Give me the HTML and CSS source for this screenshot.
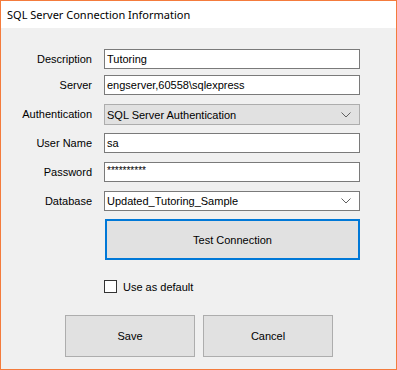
FILE: index.html
```html
<!DOCTYPE html>
<html lang="en">
<head>
    <meta charset="UTF-8">
    <title>SQL Server Connection Information</title>
    <link rel="stylesheet" href="styles.css">
</head>
<body>
    <div class="window">
        <div class="title-bar">SQL Server Connection Information</div>
        <div class="content">
            <div class="form">
                <label class="label">Description</label>
                <div class="field text-box">Tutoring</div>

                <label class="label">Server</label>
                <div class="field text-box">engserver,60558\sqlexpress</div>

                <label class="label tall">Authentication</label>
                <div class="field combo disabled">
                    <span>SQL Server Authentication</span>
                    <svg class="chevron" width="10" height="6" viewBox="0 0 10 6"><path d="M0.5 0.5 L5 5 L9.5 0.5" fill="none" stroke="#606060" stroke-width="1"/></svg>
                </div>

                <label class="label">User Name</label>
                <div class="field text-box">sa</div>

                <label class="label">Password</label>
                <div class="field text-box password">**********</div>

                <label class="label">Database</label>
                <div class="field text-box combo-db">
                    <span>Updated_Tutoring_Sample</span>
                    <svg class="chevron" width="10" height="6" viewBox="0 0 10 6"><path d="M0.5 0.5 L5 5 L9.5 0.5" fill="none" stroke="#606060" stroke-width="1"/></svg>
                </div>

                <div></div>
                <button class="test-btn">Test Connection</button>
            </div>

            <div class="check-row">
                <span class="check-box"></span>
                <span>Use as default</span>
            </div>

            <div class="actions">
                <button class="btn">Save</button>
                <button class="btn">Cancel</button>
            </div>
        </div>
    </div>
</body>
</html>
```

FILE: styles.css
```css
body {
    margin: 0;
    font-family: "Liberation Sans", Arial, sans-serif;
    font-size: 11px;
    color: #000;
    background: #f0f0f0;
}

.window {
    width: 397px;
    height: 370px;
    box-sizing: border-box;
    border: 1px solid #f47b3c;
    background: #f0f0f0;
}

.title-bar {
    height: 27px;
    background: #fff;
    font-family: "Noto Sans", "Open Sans", sans-serif;
    font-size: 11px;
    line-height: 27px;
    padding-left: 6px;
    color: #000;
}

.content {
    padding-top: 21px;
}

.form {
    display: grid;
    grid-template-columns: 91px 256px;
    grid-template-rows: 20px 26px 30px 28px 29px 29px 49px;
    column-gap: 12px;
    align-items: end;
}

.label {
    text-align: right;
    line-height: 20px;
}

.label.tall {
    line-height: 21px;
}

.field {
    height: 20px;
    box-sizing: border-box;
    border: 1px solid #7a7a7a;
    background: #fff;
    display: flex;
    align-items: center;
    padding-left: 2px;
}

.password {
    font-size: 10px;
    align-items: flex-start;
    padding-top: 2px;
}

.combo {
    height: 21px;
    justify-content: space-between;
    padding-right: 8px;
}

.combo.disabled {
    background: #e1e1e1;
    border-color: #adadad;
}

.combo-db {
    justify-content: space-between;
    padding-right: 8px;
}

.chevron {
    display: block;
}

.test-btn {
    height: 41px;
    margin-left: 1px;
    width: 255px;
    box-sizing: border-box;
    border: 2px solid #0078d7;
    background: #e1e1e1;
    font-family: "Liberation Sans", Arial, sans-serif;
    font-size: 11px;
    color: #000;
    padding: 0;
}

.check-row {
    display: flex;
    align-items: center;
    height: 13px;
    gap: 6px;
    margin-top: 20px;
    margin-left: 103px;
}

.check-box {
    width: 13px;
    height: 13px;
    box-sizing: border-box;
    border: 1px solid #333;
    background: #fff;
}

.actions {
    display: flex;
    gap: 8px;
    margin-top: 22px;
    margin-left: 64px;
}

.btn {
    width: 130px;
    height: 42px;
    box-sizing: border-box;
    border: 1px solid #adadad;
    background: #e1e1e1;
    font-family: "Liberation Sans", Arial, sans-serif;
    font-size: 11px;
    color: #000;
    padding: 0;
}
```
